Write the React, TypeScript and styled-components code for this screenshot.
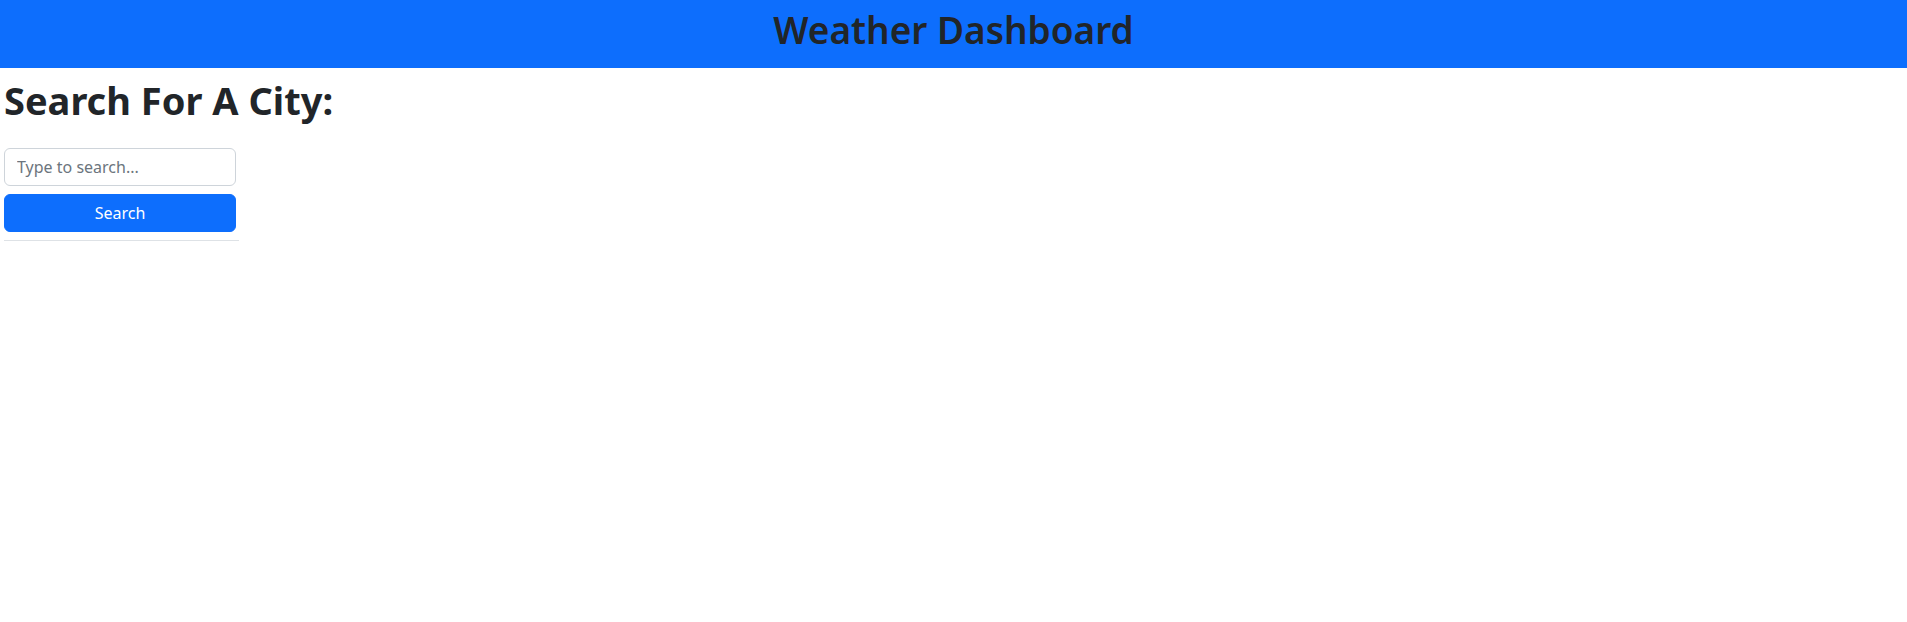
import styled, { createGlobalStyle } from "styled-components";

const GlobalStyle = createGlobalStyle`
  * { box-sizing: border-box; }
  body {
    margin: 0;
    background: #fff;
    color: #212529;
    font-family: "Noto Sans", "Open Sans", sans-serif;
    font-size: 16px;
  }
`;

const Header = styled.header`
  height: 68px;
  background: #0d6efd;
  display: flex;
  align-items: center;
  justify-content: center;
  padding-bottom: 8px;
`;

const Title = styled.h1`
  margin: 0;
  font-size: 37px;
  font-weight: 600;
  line-height: 1.2;
  color: #212529;
`;

const Main = styled.main`
  padding: 0 4px;
`;

const Sidebar = styled.aside`
  width: 235px;
  display: flex;
  flex-direction: column;
`;

const SearchHeading = styled.h2`
  margin: 10px 0 0;
  font-size: 38px;
  font-weight: 700;
  line-height: 1.2;
  white-space: nowrap;
`;

const SearchInput = styled.input`
  margin-top: 24px;
  width: 232px;
  height: 38px;
  padding: 6px 12px;
  font: inherit;
  color: #212529;
  border: 1px solid #ced4da;
  border-radius: 6px;
  &::placeholder { color: #6c757d; }
`;

const SearchButton = styled.button`
  margin-top: 8px;
  width: 232px;
  height: 38px;
  font: inherit;
  color: #fff;
  background: #0d6efd;
  border: 1px solid #0d6efd;
  border-radius: 6px;
`;

const Divider = styled.hr`
  margin: 8px 0 0;
  border: 0;
  border-top: 1px solid #dee2e6;
`;

export default function App() {
  return (
    <>
      <GlobalStyle />
      <Header>
        <Title>Weather Dashboard</Title>
      </Header>
      <Main>
        <Sidebar>
          <SearchHeading>Search For A City:</SearchHeading>
          <SearchInput placeholder="Type to search..." />
          <SearchButton>Search</SearchButton>
          <Divider />
        </Sidebar>
      </Main>
    </>
  );
}
